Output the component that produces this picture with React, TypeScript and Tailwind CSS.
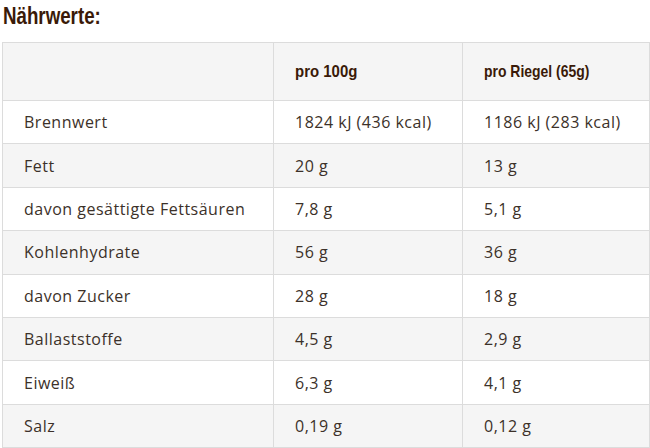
const rows: [string, string, string][] = [
  ["Brennwert", "1824 kJ (436 kcal)", "1186 kJ (283 kcal)"],
  ["Fett", "20 g", "13 g"],
  ["davon gesättigte Fettsäuren", "7,8 g", "5,1 g"],
  ["Kohlenhydrate", "56 g", "36 g"],
  ["davon Zucker", "28 g", "18 g"],
  ["Ballaststoffe", "4,5 g", "2,9 g"],
  ["Eiweiß", "6,3 g", "4,1 g"],
  ["Salz", "0,19 g", "0,12 g"],
];

const cond =
  "inline-block origin-left font-bold text-[#3a1a08] [font-family:'Liberation_Sans',Arial,sans-serif]";

export default function App() {
  return (
    <div className="w-[650px] h-[448px] overflow-hidden bg-white">
      <h2 className="h-[42px] pl-[3px] leading-[32px]">
        <span className={`${cond} scale-x-[0.78] text-[24px]`}>Nährwerte:</span>
      </h2>
      <table className="ml-[2px] w-[648px] border-collapse table-fixed text-[16px] tracking-[0.5px] text-[#3c3129] [font-family:'Open_Sans',sans-serif]">
        <colgroup>
          <col className="w-[271px]" />
          <col className="w-[189px]" />
          <col />
        </colgroup>
        <thead>
          <tr className="h-[58px] bg-[#f5f5f5]">
            <th className="border border-[#dcdcdc]" />
            <th className="border border-[#dcdcdc] pl-[21px] text-left tracking-normal">
              <span className={`${cond} scale-x-[0.88] text-[17px]`}>pro 100g</span>
            </th>
            <th className="border border-[#dcdcdc] pl-[21px] text-left tracking-normal">
              <span className={`${cond} scale-x-[0.82] text-[17px]`}>pro Riegel (65g)</span>
            </th>
          </tr>
        </thead>
        <tbody>
          {rows.map((r, i) => (
            <tr key={r[0]} className={i % 2 === 1 ? "h-[43.4px] bg-[#f5f5f5]" : "h-[43.4px] bg-white"}>
              {r.map((c, j) => (
                <td key={j} className="border border-[#dcdcdc] pl-[21px] leading-[20px]">
                  {c}
                </td>
              ))}
            </tr>
          ))}
        </tbody>
      </table>
    </div>
  );
}
